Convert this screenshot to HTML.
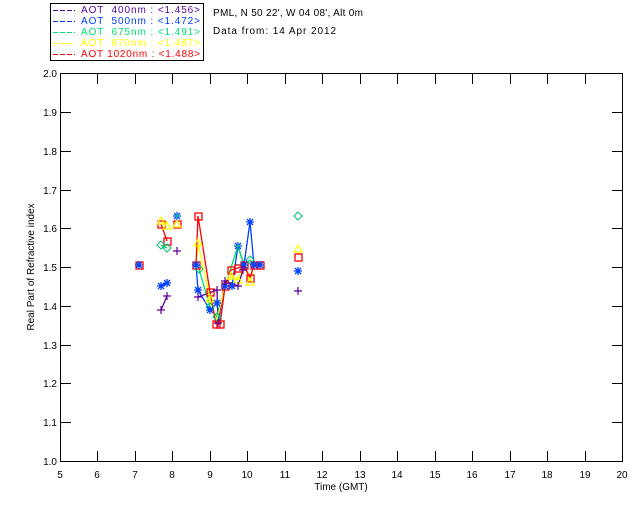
<!DOCTYPE html>
<html><head><meta charset="utf-8"><style>
body{margin:0;background:#fff}
svg{display:block;font-family:"Liberation Sans",sans-serif;font-size:10px}
</style></head><body>
<svg width="640" height="512" viewBox="0 0 640 512">
<rect width="640" height="512" fill="#fff"/>
<rect x="50.5" y="3.5" width="153" height="57" fill="none" stroke="#000" stroke-width="1"/>
<g font-size="10">
<path d="M53 10.5h22" stroke="#5a00a0" stroke-dasharray="5 2"/>
<path d="M53 21.5h22" stroke="#0040ff" stroke-dasharray="5 2"/>
<path d="M53 32.5h22" stroke="#00e070" stroke-dasharray="5 2"/>
<path d="M53 43.5h22" stroke="#ffff00" stroke-dasharray="5 2"/>
<path d="M53 54.5h22" stroke="#ff0000" stroke-dasharray="5 2"/>
<text x="81" y="13" fill="#5a00a0" textLength="119" lengthAdjust="spacing" xml:space="preserve">AOT  400nm : &lt;1.456&gt;</text>
<text x="81" y="24" fill="#0040ff" textLength="119" lengthAdjust="spacing" xml:space="preserve">AOT  500nm : &lt;1.472&gt;</text>
<text x="81" y="35" fill="#00e070" textLength="119" lengthAdjust="spacing" xml:space="preserve">AOT  675nm : &lt;1.491&gt;</text>
<text x="81" y="46" fill="#ffff00" textLength="119" lengthAdjust="spacing" xml:space="preserve">AOT  870nm : &lt;1.487&gt;</text>
<text x="81" y="57" fill="#ff0000" textLength="119" lengthAdjust="spacing" xml:space="preserve">AOT 1020nm : &lt;1.488&gt;</text>
</g>
<text x="213" y="16" textLength="150" lengthAdjust="spacing">PML, N 50 22', W 04 08', Alt 0m</text>
<text x="213" y="34" textLength="123" lengthAdjust="spacing">Data from: 14 Apr 2012</text>
<rect x="60.5" y="73.5" width="562" height="388" fill="none" stroke="#000"/>
<g stroke="#000">
<path d="M97.5 461v-10M135.5 461v-10M172.5 461v-10M210.5 461v-10M247.5 461v-10M285.5 461v-10M322.5 461v-10M360.5 461v-10M397.5 461v-10M435.5 461v-10M472.5 461v-10M510.5 461v-10M547.5 461v-10M585.5 461v-10"/>
<path d="M97.5 74v10M135.5 74v10M172.5 74v10M210.5 74v10M247.5 74v10M285.5 74v10M322.5 74v10M360.5 74v10M397.5 74v10M435.5 74v10M472.5 74v10M510.5 74v10M547.5 74v10M585.5 74v10"/>
<path d="M61 422.5h10M61 383.5h10M61 345.5h10M61 306.5h10M61 267.5h10M61 228.5h10M61 190.5h10M61 151.5h10M61 112.5h10"/>
<path d="M622 422.5h-10M622 383.5h-10M622 345.5h-10M622 306.5h-10M622 267.5h-10M622 228.5h-10M622 190.5h-10M622 151.5h-10M622 112.5h-10"/>
</g>
<g text-anchor="end">
<text x="57" y="465">1.0</text><text x="57" y="426">1.1</text><text x="57" y="387">1.2</text><text x="57" y="349">1.3</text><text x="57" y="310">1.4</text><text x="57" y="271">1.5</text><text x="57" y="232">1.6</text><text x="57" y="194">1.7</text><text x="57" y="155">1.8</text><text x="57" y="116">1.9</text><text x="57" y="77">2.0</text>
</g>
<g text-anchor="middle">
<text x="60" y="478">5</text><text x="97" y="478">6</text><text x="135" y="478">7</text><text x="172" y="478">8</text><text x="210" y="478">9</text><text x="247" y="478">10</text><text x="285" y="478">11</text><text x="322" y="478">12</text><text x="360" y="478">13</text><text x="397" y="478">14</text><text x="435" y="478">15</text><text x="472" y="478">16</text><text x="510" y="478">17</text><text x="547" y="478">18</text><text x="585" y="478">19</text><text x="622" y="478">20</text>
<text x="341" y="490">Time (GMT)</text>
<text transform="translate(34,267) rotate(-90)">Real Part of Refractive index</text>
</g>
<g fill="none" stroke-width="1.3">
<path stroke="#5a00a0" d="M161 310L167 296M198 297L217 290L218 323L225 281L238 286L243 270"/>
<path stroke="#0040ff" d="M161 286L167 283M196 265L198 290L210 310L217 303L220 324L225 286L232 286L238 246L244 265L250 222L254 265L260 265"/>
<path stroke="#00e070" d="M161 245L167 248M199 269L210 307L217 317L225 286L238 246L244 265L250 260L254 265L260 265"/>
<path stroke="#ffff00" d="M161 221L167 226M196 265L198 243L210 299L216 324L225 286L231 276L238 280L244 265L250 282L254 265L260 265"/>
<path stroke="#ff0000" d="M161 224L167 241M196 265L198 216L210 292L216 324L220 324L225 286L231 270L238 268L244 265L250 278L254 265L260 265"/>
</g>
<g fill="none" stroke="#ff0000" stroke-width="1.3">
<rect x="136" y="262" width="7" height="7"/><rect x="158" y="221" width="7" height="7"/><rect x="164" y="238" width="7" height="7"/><rect x="174" y="221" width="7" height="7"/><rect x="195" y="213" width="7" height="7"/><rect x="193" y="262" width="7" height="7"/><rect x="207" y="289" width="7" height="7"/><rect x="213" y="321" width="7" height="7"/><rect x="217" y="321" width="7" height="7"/><rect x="222" y="283" width="7" height="7"/><rect x="228" y="267" width="7" height="7"/><rect x="235" y="265" width="7" height="7"/><rect x="241" y="262" width="7" height="7"/><rect x="247" y="275" width="7" height="7"/><rect x="251" y="262" width="7" height="7"/><rect x="257" y="262" width="7" height="7"/><rect x="295" y="254" width="7" height="7"/>
</g>
<g fill="none" stroke="#ffff00" stroke-width="1.2">
<path d="M161 217l4 7h-8zM167 222l4 7h-8zM177 220l4 7h-8zM198 239l4 7h-8zM210 295l4 7h-8zM231 272l4 7h-8zM238 276l4 7h-8zM250 278l4 7h-8zM298 245l4 7h-8z"/>
</g>
<g fill="none" stroke="#00c070" stroke-width="1">
<path d="M161 241l4 4-4 4-4-4zM167 244l4 4-4 4-4-4zM199 265l4 4-4 4-4-4zM210 303l4 4-4 4-4-4zM217 313l4 4-4 4-4-4zM250 256l4 4-4 4-4-4zM298 212l4 4-4 4-4-4z"/>
</g>
<g stroke="#0040ff" stroke-width="1.3">
<path id="a" d="M-4 0h8M0-4v8M-3-3l6 6M-3 3l6-6" transform="translate(139,265)"/>
<use href="#a" x="38" y="-49"/><use href="#a" x="22" y="21"/><use href="#a" x="28" y="18"/><use href="#a" x="57" y="0"/><use href="#a" x="59" y="25"/><use href="#a" x="71" y="45"/><use href="#a" x="78" y="38"/><use href="#a" x="86" y="21"/><use href="#a" x="93" y="21"/><use href="#a" x="99" y="-19"/><use href="#a" x="105" y="0"/><use href="#a" x="111" y="-43"/><use href="#a" x="115" y="0"/><use href="#a" x="121" y="0"/><use href="#a" x="159" y="6"/>
</g>
<g stroke="#00e070" stroke-width="1">
<path d="M175 216h4M177 214v4M236 246h4M238 244v4"/>
</g>
<g stroke="#5a00a0" stroke-width="1.2">
<path d="M157 310h8M161 306v8M163 296h8M167 292v8M173 251h8M177 247v8M194 297h8M198 293v8M213 290h8M217 286v8M214 323h8M218 319v8M221 281h8M225 277v8M234 286h8M238 282v8M239 270h8M243 266v8M294 291h8M298 287v8"/>
</g>
</svg>
</body></html>
